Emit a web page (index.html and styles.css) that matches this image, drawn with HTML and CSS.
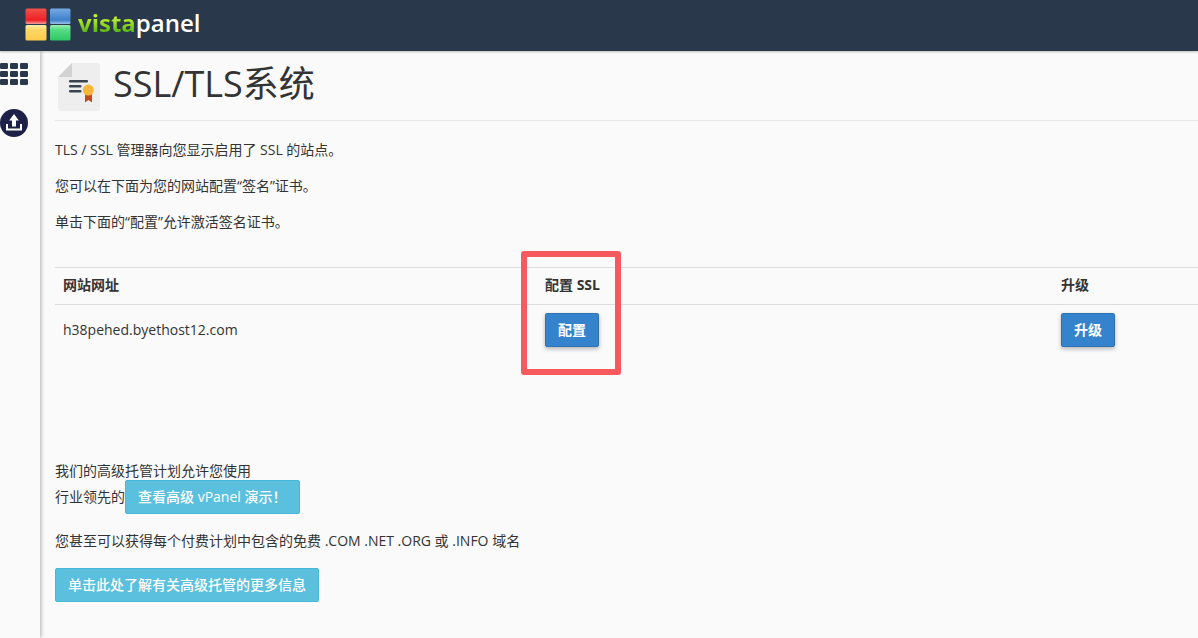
FILE: index.html
```html
<!DOCTYPE html>
<html lang="zh-CN">
<head>
<meta charset="utf-8">
<title>SSL/TLS系统</title>
<link rel="stylesheet" href="styles.css">
</head>
<body>
<header class="topbar">
  <svg class="logo-mark" width="46" height="33" viewBox="0 0 46 33" aria-hidden="true">
    <defs>
      <linearGradient id="r" x1="0" y1="0" x2="0" y2="1"><stop offset="0" stop-color="#f0524a"/><stop offset=".75" stop-color="#ee1f26"/><stop offset="1" stop-color="#f4a09c"/></linearGradient>
      <linearGradient id="b" x1="0" y1="0" x2="0" y2="1"><stop offset="0" stop-color="#76a9e8"/><stop offset=".75" stop-color="#3f80c8"/><stop offset="1" stop-color="#9cc0e8"/></linearGradient>
      <linearGradient id="y" x1="0" y1="0" x2="0" y2="1"><stop offset="0" stop-color="#fff0b0"/><stop offset=".3" stop-color="#fdd866"/><stop offset="1" stop-color="#fdcb4a"/></linearGradient>
      <linearGradient id="g" x1="0" y1="0" x2="0" y2="1"><stop offset="0" stop-color="#9af0b4"/><stop offset=".3" stop-color="#55dc86"/><stop offset="1" stop-color="#2fc765"/></linearGradient>
    </defs>
    <rect x="0.5" y="0.5" width="21" height="15.500" rx="1.5" fill="url(#r)"/>
    <rect x="25" y="0.5" width="20.500" height="15.500" rx="1.5" fill="url(#b)"/>
    <rect x="0.5" y="17" width="21" height="15.500" rx="1.5" fill="url(#y)"/>
    <rect x="25" y="17" width="20.500" height="15.500" rx="1.5" fill="url(#g)"/>
  </svg>
  <span class="logo-text"><span class="logo-vista">vista</span>panel</span>
</header>
<div class="shell">
  <aside class="sidebar">
    <svg class="grid-icon" width="28" height="22" viewBox="0 0 28 22" aria-hidden="true">
      <g fill="#29394b">
        <rect x="0" y="0" width="8" height="6" rx="1.2"/><rect x="10" y="0" width="8" height="6" rx="1.2"/><rect x="20" y="0" width="8" height="6" rx="1.2"/>
        <rect x="0" y="8" width="8" height="6" rx="1.2"/><rect x="10" y="8" width="8" height="6" rx="1.2"/><rect x="20" y="8" width="8" height="6" rx="1.2"/>
        <rect x="0" y="16" width="8" height="6" rx="1.2"/><rect x="10" y="16" width="8" height="6" rx="1.2"/><rect x="20" y="16" width="8" height="6" rx="1.2"/>
      </g>
    </svg>
    <svg class="upload-icon" width="28" height="28" viewBox="0 0 28 28" aria-hidden="true">
      <circle cx="14" cy="14" r="14" fill="#1d2148"/>
      <path d="M14 5l4.800 6.500h-2.800v6h-4v-6H9.200z" fill="#fff"/>
      <path d="M6 15h2v4.500h12v-4.500h2v6.500H6z" fill="#fff"/>
    </svg>
  </aside>
  <main class="content">
    <div class="page-head">
      <svg class="cert-icon" width="42" height="48" viewBox="0 0 42 48" aria-hidden="true">
        <path d="M14 0h25a3 3 0 0 1 3 3v42a3 3 0 0 1-3 3H3a3 3 0 0 1-3-3V14z" fill="#eeeeee"/>
        <path d="M14 0v14H0z" fill="#d2d2d2"/>
        <g fill="#3a4450">
          <rect x="11" y="17" width="19" height="2.500" rx="1"/>
          <rect x="11" y="22" width="12.500" height="2.500" rx="1"/>
          <rect x="11" y="27" width="12.500" height="2.500" rx="1"/>
        </g>
        <path d="M27 30h7v9.500l-3.500-2.500-3.500 2.500z" fill="#c8481a"/>
        <circle cx="30.300" cy="27" r="5.500" fill="#f6b73c"/>
      </svg>
      <h1 class="page-title">SSL/TLS系统</h1>
    </div>
    <p class="intro first">TLS / SSL 管理器向您显示启用了 SSL 的站点。</p>
    <p class="intro">您可以在下面为您的网站配置“签名”证书。</p>
    <p class="intro">单击下面的“配置”允许激活签名证书。</p>

    <div class="site-table">
      <div class="cell head">网站网址</div>
      <div class="cell head">配置 SSL</div>
      <div class="cell head">升级</div>
      <div class="cell body-cell domain">h38pehed.byethost12.com</div>
      <div class="cell body-cell"><a class="btn btn-primary">配置</a></div>
      <div class="cell body-cell"><a class="btn btn-primary">升级</a></div>
    </div>

    <div class="promo">
      <div class="promo-line">我们的高级托管计划允许您使用</div>
      <div class="promo-line inline">行业领先的<a class="btn btn-info demo">查看高级 vPanel 演示！</a></div>
      <p class="promo-free">您甚至可以获得每个付费计划中包含的免费 .COM .NET .ORG 或 .INFO 域名</p>
      <a class="btn btn-info more">单击此处了解有关高级托管的更多信息</a>
    </div>
  </main>
</div>
<div class="highlight"></div>
</body>
</html>
```
FILE: styles.css
```css
* { box-sizing: border-box; }
html, body { height: 100%; }
body {
  margin: 0;
  width: 1198px;
  height: 638px;
  overflow: hidden;
  background: #fafafa;
  color: #333;
  font-family: "Open Sans", "Noto Sans CJK SC", sans-serif;
  font-size: 14px;
  line-height: 18px;
  position: relative;
}
.topbar {
  height: 51px;
  background: #29394b;
  display: flex;
  align-items: flex-start;
  padding: 8px 0 0 25px;
  position: relative;
  z-index: 2;
  box-shadow: 0 1px 2px rgba(0,0,0,.25);
}
.logo-text {
  margin-left: 7px;
  margin-top: -2px;
  font-family: "Open Sans", sans-serif;
  font-size: 24px;
  line-height: 34px;
  font-weight: 600;
  color: #fff;
}
.logo-vista {
  color: #8ed11f;
  font-weight: 700;
  background: linear-gradient(180deg, #c0f030 35%, #58b812 80%);
  -webkit-background-clip: text;
  background-clip: text;
  -webkit-text-fill-color: transparent;
}
.shell { display: flex; height: 587px; }
.sidebar {
  width: 40px;
  flex: none;
  background: #fafafa;
  box-shadow: 1px 0 4px rgba(0,0,0,.3);
  display: flex;
  flex-direction: column;
  align-items: flex-start;
  padding: 12px 0 0 0;
  z-index: 1;
}
.upload-icon { margin-top: 24px; }
.content {
  flex: 1;
  min-width: 0;
  padding-left: 15px;
}
.page-head {
  height: 70px;
  display: flex;
  align-items: flex-start;
  padding: 12px 0 0 3px;
  border-bottom: 1px solid #e8e8e8;
}
.page-title {
  margin: -1px 0 0 13px;
  font-size: 36px;
  line-height: 44px;
  font-weight: 400;
  color: #333;
}
.intro { margin: 0 0 18px; }
.intro.first { margin-top: 20px; }
.site-table {
  margin-top: 36px;
  display: grid;
  grid-template-columns: 482px 516px 1fr;
  grid-template-rows: 37px 52px;
  border-top: 1px solid #ddd;
}
.cell { padding: 8px 8px; }
.head { font-weight: 700; border-bottom: 1px solid #ddd; }
.body-cell { padding-top: 8px; }
.domain { padding-top: 16px; }
.btn {
  display: inline-block;
  color: #fff;
  border-radius: 2px;
  text-decoration: none;
  font-weight: 500;
  white-space: nowrap;
}
.btn-primary {
  background: #3583cc;
  border: 1px solid #2e74b5;
  height: 34px;
  padding: 7px 12px;
  font-weight: 600;
  box-shadow: 0 2px 4px rgba(0,0,0,.28);
}
.promo { margin-top: 105px; }
.promo-line { height: 18px; }
.promo-line.inline { height: 34px; }
.btn-info {
  background: #5bc0de;
  border: 1px solid #46b8da;
  height: 34px;
  padding: 7px 12px;
}
.demo { padding-right: 13px; }
.promo-free { margin: 18px 0 0; }
.more { margin-top: 18px; }
.highlight {
  position: absolute;
  left: 521px;
  top: 251px;
  width: 100px;
  height: 124px;
  border: 6px solid #f75a5c;
  border-radius: 3px;
  z-index: 3;
}
```
